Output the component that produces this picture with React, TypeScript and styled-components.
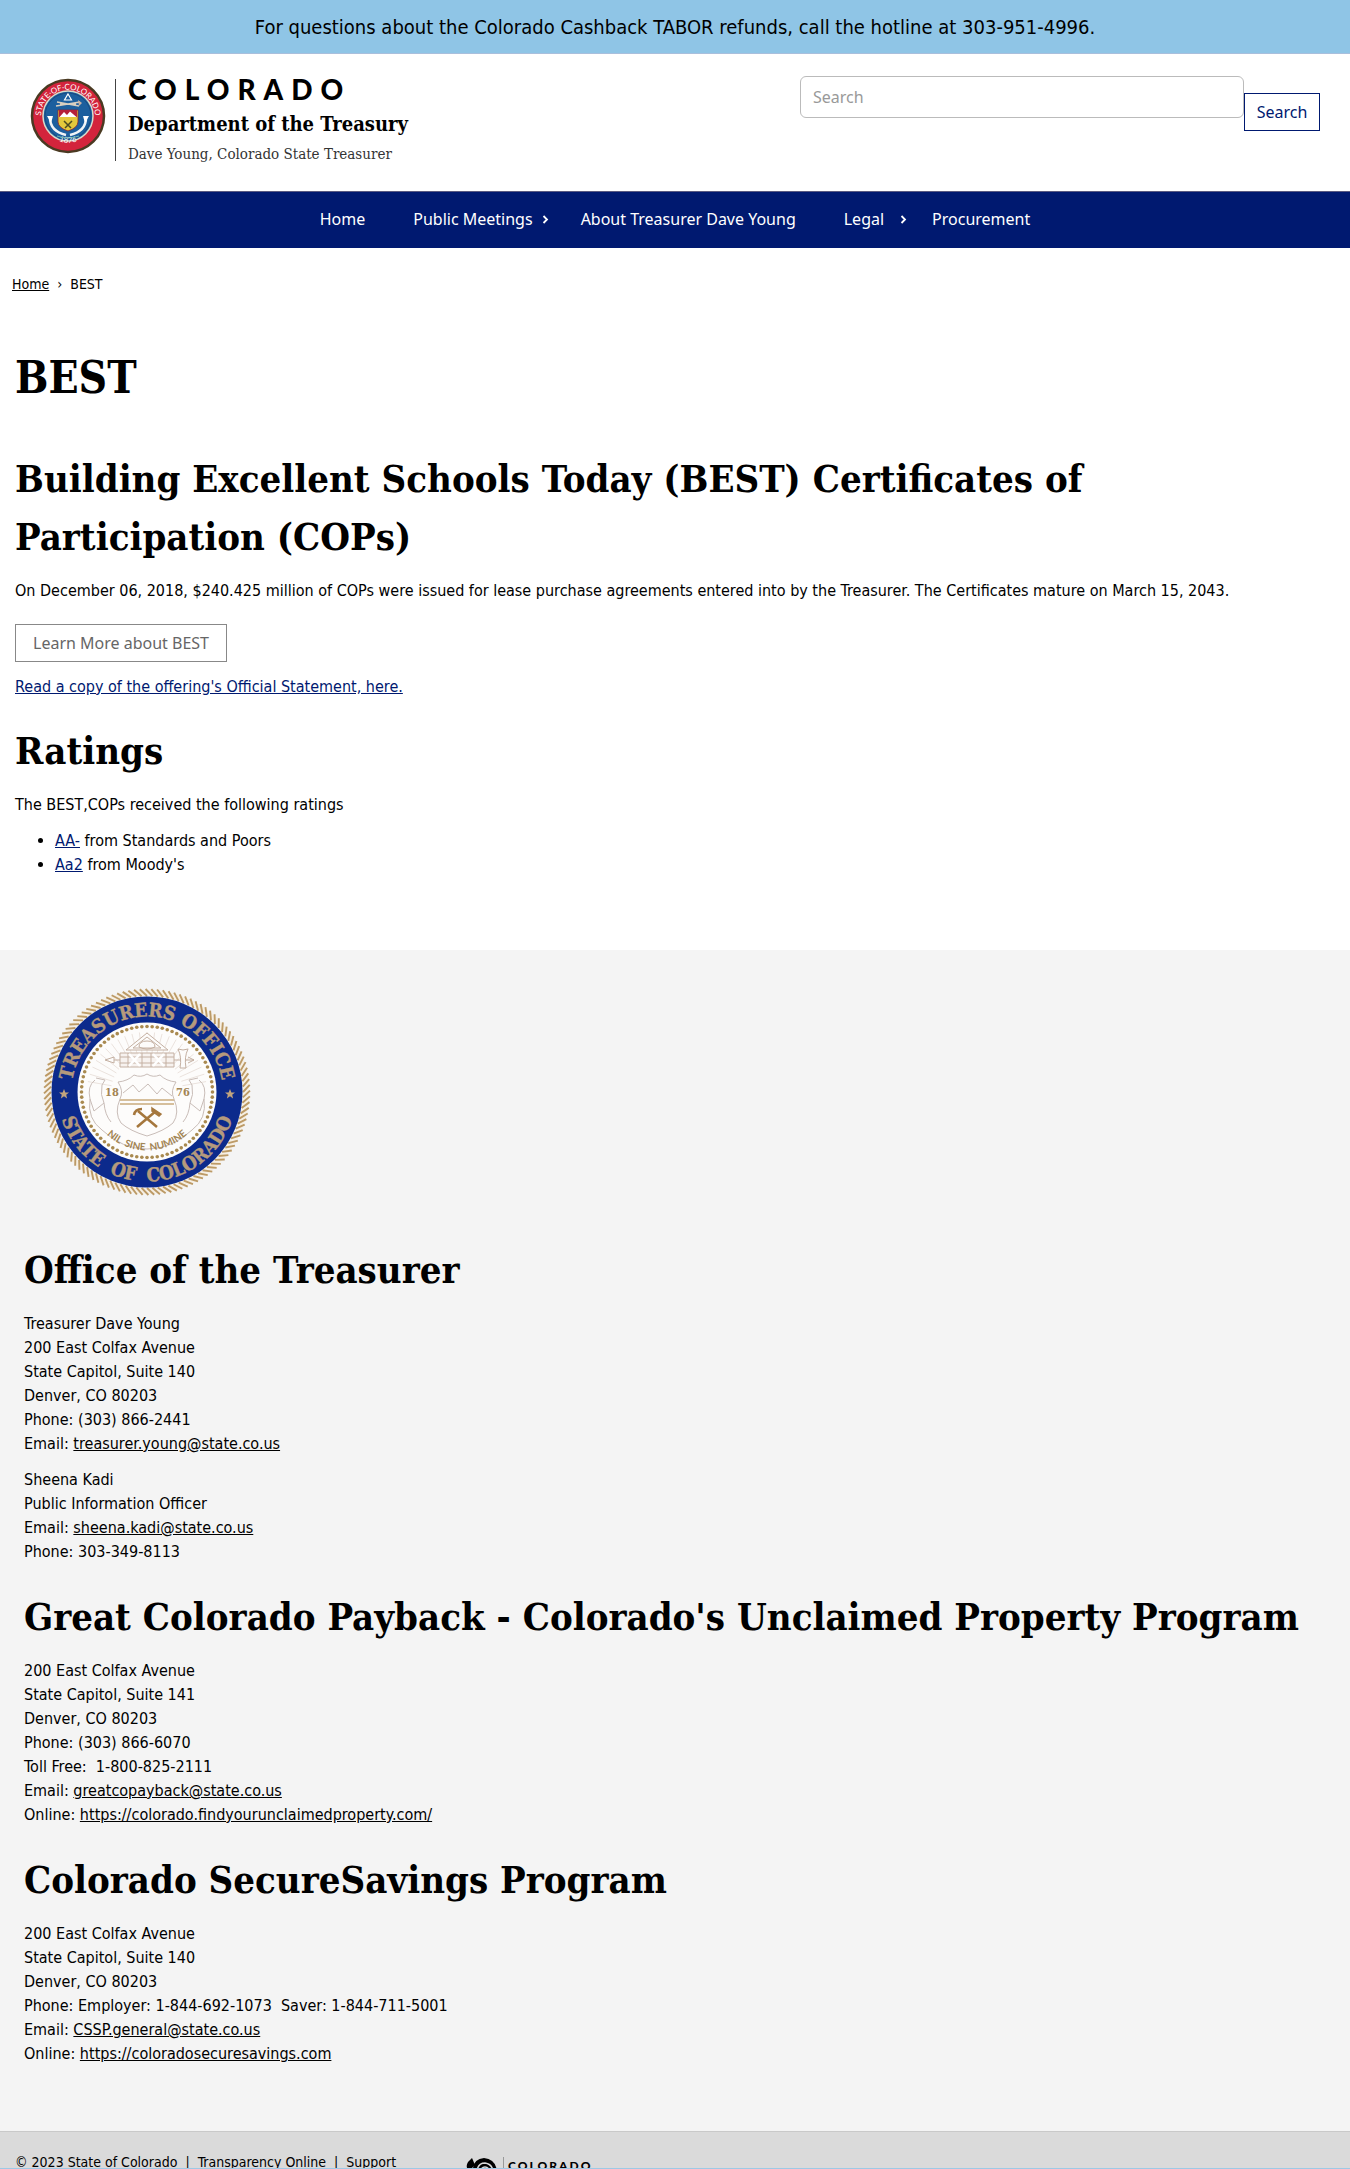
import React from "react";
import styled, { createGlobalStyle } from "styled-components";

const sans = '"DejaVu Sans Condensed", "Noto Sans", sans-serif';
const nav = '"Noto Sans", "Open Sans", sans-serif';
const slab = '"DejaVu Serif Condensed", "DejaVu Serif", serif';
const navy = "#001970";

const GlobalStyle = createGlobalStyle`
  *, *::before, *::after { box-sizing: border-box; }
  body { margin: 0; background: #fff; color: #000; font: 16px/24px ${sans}; }
  p, h1, h2, ul { margin: 0; }
`;

const Banner = styled.div`
  padding: 15px 16px 14px;
  background: #8fc5e6;
  border-bottom: 1px solid #a9bfdc;
  font-size: 20px;
  line-height: 24px;
  text-align: center;
`;

const Header = styled.header`
  display: flex;
  justify-content: space-between;
  align-items: flex-start;
  padding: 22px 30px 30px;
`;

const Brand = styled.a`
  display: flex;
  color: #000;
  text-decoration: none;
`;

const StateSealArt = styled.svg`
  width: 76px;
  height: 76px;
  margin-top: 2px;
`;

const BrandText = styled.div`
  margin: 3px 0 0 9px;
  padding-left: 12px;
  height: 82px;
  border-left: 1px solid #444;
`;

const BrandState = styled.div`
  font: 900 28px/20px Lato, sans-serif;
  letter-spacing: 8px;
`;

const BrandDept = styled.div`
  margin-top: 13px;
  font: bold 20px/24px ${slab};
`;

const BrandOfficer = styled.div`
  margin-top: 8px;
  font: 15px/20px ${slab};
  color: #333;
`;

const SearchForm = styled.form`
  display: flex;
  align-items: flex-start;
  flex: 0 1 520px;
`;

const SearchInput = styled.input`
  flex: 1;
  min-width: 0;
  height: 42px;
  padding: 0 12px;
  border: 1px solid #bbb;
  border-radius: 6px;
  background: #fff;
  font: 16px ${nav};
  &::placeholder { color: #999; opacity: 1; }
`;

const OutlineButton = styled.button`
  width: 76px;
  height: 38px;
  margin-top: 17px;
  padding: 0;
  background: #fff;
  border: 1px solid ${navy};
  color: ${navy};
  font: 16px ${nav};
`;

const NavBar = styled.nav`
  display: flex;
  justify-content: center;
  height: 57px;
  padding-bottom: 2px;
  align-items: center;
  background: ${navy};
  border-top: 1px solid #5a5a80;
`;

const NavItem = styled.div<{ $last?: boolean }>`
  display: flex;
  align-items: center;
  padding-right: ${(p) => (p.$last ? "0" : "48px")};
`;

const NavItemWithMenu = styled(NavItem)`
  padding-right: 0;
`;

const NavLink = styled.a`
  color: #fff;
  font: 16px/24px ${nav};
  text-decoration: none;
`;

const Arrow = styled.span<{ $gap: number }>`
  display: flex;
  width: 48px;
  padding-left: ${(p) => p.$gap}px;
`;

const Main = styled.main`
  padding: 0 15px 73px;
`;

const Breadcrumb = styled.nav`
  display: flex;
  gap: 8px;
  padding: 24px 12px 0;
  font-size: 14px;
  line-height: 24px;
  a { color: #000; }
`;

const Title = styled.h1`
  padding-top: 46px;
  font: bold 44px/72px ${slab};
`;

const Heading = styled.h2`
  font: bold 38px/58px ${slab};
`;

const LeadHeading = styled(Heading)`
  max-width: 1120px;
  margin-top: 36px;
`;

const Para = styled.p`
  padding-top: 13px;
  a { color: ${navy}; }
`;

const LearnMore = styled.a`
  display: inline-flex;
  align-items: center;
  height: 38px;
  margin-top: 21px;
  padding: 0 17px;
  border: 1px solid #888;
  color: #666;
  font: 16px ${nav};
  text-decoration: none;
`;

const RatingsHeading = styled(Heading)`
  margin-top: 23px;
`;

const Ratings = styled.ul`
  margin-top: 12px;
  padding-left: 40px;
  a { color: ${navy}; }
`;

const Contact = styled.section`
  padding: 37px 24px 65px;
  background: #f4f4f4;
  a { color: #000; }
`;

const TreasurerSeal = styled.svg`
  display: block;
  width: 210px;
  height: 210px;
  margin-left: 18px;
`;

const OfficeHeading = styled(Heading)<{ $top: number }>`
  margin-top: ${(p) => p.$top}px;
`;

const Address = styled.p`
  padding-top: 13px;
  white-space: pre-wrap;
  & + & { padding-top: 12px; }
`;

const Footer = styled.footer`
  display: flex;
  gap: 68px;
  height: 38px;
  overflow: hidden;
  padding: 18px 15px 0;
  background: #dadada;
  border-top: 1px solid #c9c9c9;
  border-bottom: 1px solid #9dc9e6;
`;

const FooterLinks = styled.div`
  font-size: 14px;
  line-height: 24px;
  white-space: pre;
  a { color: #000; text-decoration: none; }
`;

const FooterBrand = styled.div`
  display: flex;
  align-items: flex-start;
  padding-top: 7px;
`;

const FooterMark = styled.svg`
  width: 34px;
  height: 30px;
`;

const FooterName = styled.div`
  margin-left: 5px;
  padding: 3px 0 20px 4px;
  border-left: 1px solid #999;
  font: 900 12px/12px Lato, sans-serif;
  letter-spacing: 2px;
`;

function Chevron() {
  return (
    <svg width="8" height="12" viewBox="0 0 8 12" fill="none" stroke="#fff" strokeWidth="1.800" aria-hidden="true">
      <path d="M1.500 3 L5 6.500 L1.500 10" />
    </svg>
  );
}

function StateSeal() {
  return (
    <StateSealArt viewBox="0 0 76 76" role="img" aria-label="Seal of the State of Colorado">
      <defs>
        <path id="stateTop" d="M12 46 A27 27 0 1 1 64 46" />
        <path id="stateBottom" d="M6 38 A32.500 32.500 0 0 0 70 38" />
      </defs>
      <circle cx="38" cy="38" r="36" fill="#d3243c" stroke="#4a3a22" strokeWidth="2.500" />
      <circle cx="38" cy="38" r="25" fill="#1c5f9e" stroke="#d8dccb" strokeWidth="1.500" />
      <circle cx="38" cy="38" r="23" fill="none" stroke="#174a80" strokeWidth="1" />
      <g fill="#fff" fontFamily="Lato, sans-serif">
        <text fontSize="8" textAnchor="middle"><textPath href="#stateTop" startOffset="50%">STATE·OF·COLORADO</textPath></text>
        <text fontSize="8" textAnchor="middle"><textPath href="#stateBottom" startOffset="50%">1876</textPath></text>
      </g>
      <path d="M38 16 L41.500 22 H34.500 Z" fill="none" stroke="#fff" strokeWidth="1.200" />
      <path d="M26 28 L50 24 M27 24 L49 28 M30 26 H46" stroke="#d8cfc0" strokeWidth="1.500" />
      <path d="M48 22 L52 25 L49 28 Z" fill="#c9b2a3" />
      <path d="M28 32 H48 V44 Q47.500 50 38 53 Q28.500 50 28 44 Z" fill="#e3c83c" stroke="#8b2531" strokeWidth="0.800" />
      <path d="M29 32 H47 V39 H29 Z" fill="#b5213a" />
      <path d="M29.500 39 L34 34 L37 37 L40 33.500 L46.500 39 Z" fill="#fff" />
      <path d="M34 43 L41 50 M42 43 L35 50" stroke="#4b4a22" strokeWidth="1.500" />
      <path d="M20 40 Q20 53 36 57 M56 40 Q56 53 40 57" fill="none" stroke="#f1f4f7" strokeWidth="2.500" />
      <path d="M17 38 L23 38 L21 45 Z M59 38 L53 38 L55 45 Z" fill="#fff" />
      <path d="M27 58 Q38 62 49 58" fill="none" stroke="#6fb4b0" strokeWidth="1.200" />
    </StateSealArt>
  );
}

const polar = (radius: number, degrees: number): [number, number] => {
  const a = (degrees * Math.PI) / 180;
  return [105 + radius * Math.cos(a), 105 + radius * Math.sin(a)];
};
const ropeTicks = Array.from({ length: 112 }, (_, i) => {
  const angle = (i * 360) / 112;
  const [x1, y1] = polar(96, angle);
  const [x2, y2] = polar(103, angle - 4);
  return `M${x1} ${y1} L${x2} ${y2}`;
}).join(" ");
const beads = Array.from({ length: 80 }, (_, i) => polar(65.5, i * 4.5));
const rays = Array.from({ length: 23 }, (_, i) => {
  const angle = 190 + (i * 160) / 22;
  const [x1, y1] = polar(36, angle);
  const [x2, y2] = polar(60, angle);
  return `M${x1} ${y1} L${x2} ${y2}`;
}).join(" ");

function TreasurersOfficeSeal() {
  const star = "M0 -5 L1.400 -1.600 L5 -1.500 L2.200 0.800 L3.100 4.400 L0 2.300 L-3.100 4.400 L-2.200 0.800 L-5 -1.500 L-1.400 -1.600 Z";
  return (
    <TreasurerSeal viewBox="0 0 210 210" role="img" aria-label="Treasurers Office, State of Colorado">
      <defs>
        <path id="sealTop" d="M29.500 105 A75.500 75.500 0 0 1 180.500 105" />
        <path id="sealBottom" d="M15.500 105 A89.500 89.500 0 0 0 194.500 105" />
        <path id="sealMotto" d="M46.500 105 A58.500 58.500 0 0 0 163.500 105" />
      </defs>
      <circle cx="105" cy="105" r="99" fill="none" stroke="#f6efe3" strokeWidth="6" />
      <path d={ropeTicks} stroke="#bc9a66" strokeWidth="1.900" />
      <circle cx="105" cy="105" r="95.500" fill="#0c2a8c" />
      <circle cx="105" cy="105" r="69.500" fill="#fdfcfb" />
      {beads.map(([x, y], i) => (
        <circle key={i} cx={x} cy={y} r="1.800" fill="#a98a50" />
      ))}
      <g fill="#b59a7c" stroke="#b59a7c" strokeWidth="0.400" fontFamily={slab} fontWeight="bold" fontSize="19" textAnchor="middle">
        <text><textPath href="#sealTop" startOffset="50%">TREASURERS OFFICE</textPath></text>
        <text><textPath href="#sealBottom" startOffset="50%">{"STATE\u00a0 OF\u00a0 COLORADO"}</textPath></text>
      </g>
      <path d={star} transform="translate(22 107)" fill="#c1a47e" />
      <path d={star} transform="translate(188 107)" fill="#c1a47e" />
      <path d={rays} stroke="#e6dcd6" strokeWidth="0.800" />
      <g fill="none" stroke="#c4b0a2" strokeWidth="1">
        <path d="M105 46 L126 63 H84 Z M105 50 L119 61 H91 Z" fill="#fdfcfb" />
        <path d="M97 60 Q97 54 105 54 Q113 54 113 60 Q105 64 97 60 Z" />
        <path d="M78 66 H132 V80 H78 Z" fill="#f7f2ef" />
        <path d="M78 70 H132 M78 76 H132 M86 66 V80 M100 66 V80 M109 66 V80 M124 66 V80" />
        <path d="M63 73 L72 70 V76 Z M72 73 H78 M132 73 H152 M152 73 L146 70 M152 73 L146 76" />
        <path d="M136 62 Q141 64 146 62 Q142 70 144 81 H138 Q140 70 136 62 Z" fill="#fdfcfb" />
        <path d="M87 67 L98 79 M98 67 L87 79 M111 67 L122 79 M122 67 L111 79" stroke="#fff" strokeWidth="2.500" />
      </g>
      <g fill="none" stroke="#c9bdb8" strokeWidth="1">
        <path d="M76 95 Q86 94 92 88 Q99 91 105 87 Q111 91 118 88 Q124 94 134 95 Q128 104 132 112 Q138 126 131 136 Q122 144 105 149 Q88 144 79 136 Q72 126 78 112 Q82 104 76 95 Z" />
        <path d="M81 106 L91 98 L97 105 L106 97 L115 107 L120 101 L130 109" />
        <path d="M53 93 Q45 99 48 112 Q45 132 60 143 Q80 162 105 162 Q130 162 150 143 Q165 132 162 112 Q165 99 157 93" />
        <path d="M54 91 L63 93 L60 98 Q58 108 62 116 L52 124 L48 112 M156 91 L147 93 L150 98 Q152 108 148 116 L158 124 L162 112" />
        <path d="M62 116 Q63 128 69 135 M141 135 Q147 128 148 116" />
      </g>
      <path d="M78 113 H132 M78 117 H132" stroke="#d6bf9c" strokeWidth="1.800" />
      <g fill="none" stroke="#a5773d" strokeWidth="2.600">
        <path d="M96 124 L115 140 M114 124 L95 140" />
        <path d="M92 128 Q93 122 100 122" />
        <path d="M110 121 L119 127 L117 129 L110 124 Z" strokeWidth="1.500" fill="#a5773d" />
      </g>
      <g fill="#a28453" fontFamily={slab} fontWeight="bold" textAnchor="middle">
        <text x="70" y="109" fontSize="11">18</text>
        <text x="141" y="109" fontSize="11">76</text>
      </g>
      <text fill="#a28453" fontFamily="Lato, sans-serif" fontWeight="bold" fontSize="10" textAnchor="middle">
        <textPath href="#sealMotto" startOffset="50%">{"NIL\u00a0 SINE\u00a0 NUMINE"}</textPath>
      </text>
    </TreasurerSeal>
  );
}

export default function App() {
  return (
    <>
      <GlobalStyle />
      <Banner>For questions about the Colorado Cashback TABOR refunds, call the hotline at 303-951-4996.</Banner>
      <Header>
        <Brand href="#">
          <StateSeal />
          <BrandText>
            <BrandState>COLORADO</BrandState>
            <BrandDept>Department of the Treasury</BrandDept>
            <BrandOfficer>Dave Young, Colorado State Treasurer</BrandOfficer>
          </BrandText>
        </Brand>
        <SearchForm role="search" onSubmit={(e) => e.preventDefault()}>
          <SearchInput type="search" placeholder="Search" aria-label="Search" />
          <OutlineButton type="submit">Search</OutlineButton>
        </SearchForm>
      </Header>
      <NavBar>
        <NavItem><NavLink href="#">Home</NavLink></NavItem>
        <NavItemWithMenu><NavLink href="#">Public Meetings</NavLink><Arrow $gap={9}><Chevron /></Arrow></NavItemWithMenu>
        <NavItem><NavLink href="#">About Treasurer Dave Young</NavLink></NavItem>
        <NavItemWithMenu><NavLink href="#">Legal</NavLink><Arrow $gap={16}><Chevron /></Arrow></NavItemWithMenu>
        <NavItem $last><NavLink href="#">Procurement</NavLink></NavItem>
      </NavBar>
      <Breadcrumb><a href="#">Home</a><span>›</span><span>BEST</span></Breadcrumb>
      <Main>
        <Title>BEST</Title>
        <LeadHeading>Building Excellent Schools Today (BEST) Certificates of Participation (COPs)</LeadHeading>
        <Para>On December 06, 2018, $240.425 million of COPs were issued for lease purchase agreements entered into by the Treasurer. The Certificates mature on March 15, 2043.</Para>
        <LearnMore href="#">Learn More about BEST</LearnMore>
        <Para><a href="#">Read a copy of the offering's Official Statement, here.</a></Para>
        <RatingsHeading>Ratings</RatingsHeading>
        <Para>The BEST,COPs received the following ratings</Para>
        <Ratings>
          <li><a href="#">AA-</a> from Standards and Poors</li>
          <li><a href="#">Aa2</a> from Moody's</li>
        </Ratings>
      </Main>
      <Contact>
        <TreasurersOfficeSeal />
        <OfficeHeading $top={44}>Office of the Treasurer</OfficeHeading>
        <Address>
          Treasurer Dave Young<br />200 East Colfax Avenue<br />State Capitol, Suite 140<br />Denver, CO 80203<br />Phone: (303) 866-2441<br />Email: <a href="#">treasurer.young@state.co.us</a>
        </Address>
        <Address>
          Sheena Kadi<br />Public Information Officer<br />Email: <a href="#">sheena.kadi@state.co.us</a><br />Phone: 303-349-8113
        </Address>
        <OfficeHeading $top={24}>Great Colorado Payback - Colorado's Unclaimed Property Program</OfficeHeading>
        <Address>
          200 East Colfax Avenue<br />State Capitol, Suite 141<br />Denver, CO 80203<br />Phone: (303) 866-6070<br />{"Toll Free:  1-800-825-2111"}<br />Email: <a href="#">greatcopayback@state.co.us</a><br />Online: <a href="#">https://colorado.findyourunclaimedproperty.com/</a>
        </Address>
        <OfficeHeading $top={24}>Colorado SecureSavings Program</OfficeHeading>
        <Address>
          200 East Colfax Avenue<br />State Capitol, Suite 140<br />Denver, CO 80203<br />{"Phone: Employer: 1-844-692-1073  Saver: 1-844-711-5001"}<br />Email: <a href="#">CSSP.general@state.co.us</a><br />Online: <a href="#">https://coloradosecuresavings.com</a>
        </Address>
      </Contact>
      <Footer>
        <FooterLinks>© 2023 State of Colorado  |  <a href="#">Transparency Online</a>  |  <a href="#">Support</a></FooterLinks>
        <FooterBrand>
          <FooterMark viewBox="0 0 34 30" aria-hidden="true">
            <path d="M8 1 L11 8 L5 14 Q1 10 4 5 Z" />
            <path d="M9 15 Q8 2 20 1 Q32 2 33 15 V30 H9 Z" />
            <path d="M13 14 Q14 6 21 6 Q28 7 29 14 M16 16 Q17 10 21 10 Q25 10 26 16" fill="none" stroke="#dadada" strokeWidth="1.500" />
          </FooterMark>
          <FooterName>COLORADO</FooterName>
        </FooterBrand>
      </Footer>
    </>
  );
}
